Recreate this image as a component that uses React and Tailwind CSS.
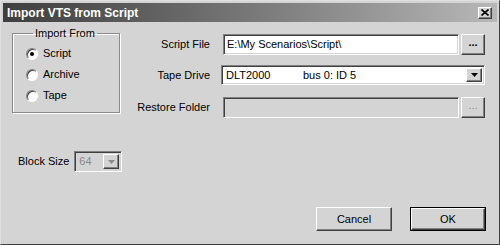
import React from "react";

const sunken =
  "border border-[#808080] border-b-white border-r-white shadow-[inset_1px_1px_0_#404040,inset_-1px_-1px_0_#d4d4d4]";
const raised =
  "border border-white border-b-[#404040] border-r-[#404040] shadow-[inset_-1px_-1px_0_#808080]";

const Radio = ({ label, checked }) => (
  <label className="flex items-center h-[21px]">
    <span className="w-[12px] h-[12px] rounded-full bg-white border border-[#808080] border-b-white border-r-white shadow-[inset_1px_1px_0_#404040] flex items-center justify-center">
      {checked && <span className="w-[4px] h-[4px] rounded-full bg-black" />}
    </span>
    <span className="ml-[5px]">{label}</span>
  </label>
);

const ArrowButton = ({ disabled }) => (
  <span
    className={`w-[16px] h-full bg-[#d4d4d4] flex items-center justify-center ${raised}`}
  >
    <svg width="7" height="4" viewBox="0 0 7 4">
      <path d="M0 0h7L3.5 4z" fill={disabled ? "#8a8a8a" : "#000"} />
    </svg>
  </span>
);

export default function App() {
  return (
    <div
      className="w-[500px] h-[245px] bg-[#d4d4d4] border border-[#e0e0e0] border-b-[#404040] border-r-[#404040] text-[11px] text-black overflow-hidden whitespace-nowrap"
      style={{ fontFamily: '"Liberation Sans", Arial, sans-serif' }}
    >
      {/* title bar */}
      <div className="mx-[2px] mt-[2px] h-[19px] bg-gradient-to-r from-[#3e3e3e] to-[#b8b8b8] flex items-center justify-between pl-[4px] pr-[5px]">
        <span className="text-white font-bold text-[12px]">Import VTS from Script</span>
        <span className={`w-[14px] h-[12px] bg-[#d4d4d4] flex items-center justify-center ${raised}`}>
          <svg width="8" height="7" viewBox="0 0 8 7">
            <path d="M0.5 0.5L7.5 6.5M7.5 0.5L0.5 6.5" stroke="#000" strokeWidth="1.6" />
          </svg>
        </span>
      </div>

      {/* top area */}
      <div className="flex">
        <div className="w-[133px] pl-[11px] pt-[5px]">
          <fieldset className="w-[108px] h-[86px] border border-[#8a8a8a] shadow-[inset_1px_1px_0_#fff,1px_1px_0_#fff] pl-[13px] pt-[4px]">
            <legend className="ml-[7px] px-[2px] leading-[12px]">Import From</legend>
            <Radio label="Script" checked />
            <Radio label="Archive" />
            <Radio label="Tape" />
          </fieldset>
        </div>

        <div className="flex flex-col pt-[12px]">
          <div className="flex items-center h-[21px]">
            <span className="w-[76px] text-right">Script File</span>
            <div className={`ml-[13px] w-[236px] h-full bg-white flex items-center pl-[3px] ${sunken}`}>
              E:\My Scenarios\Script\
            </div>
            <button className={`ml-[2px] w-[24px] h-[21px] bg-[#d4d4d4] font-bold leading-none pb-[5px] ${raised}`}>
              ...
            </button>
          </div>

          <div className="flex items-center h-[20px] mt-[10px]">
            <span className="w-[76px] text-right">Tape Drive</span>
            <div className={`ml-[11px] w-[264px] h-full bg-white flex items-center ${sunken} p-[2px]`}>
              <span className="flex-1 flex pl-[2px]">
                <span className="w-[77px]">DLT2000</span>
                <span>bus 0: ID 5</span>
              </span>
              <ArrowButton />
            </div>
          </div>

          <div className="flex items-center h-[21px] mt-[12px]">
            <span className="w-[76px] text-right">Restore Folder</span>
            <div className={`ml-[13px] w-[236px] h-full bg-[#d4d4d4] ${sunken}`} />
            <button className={`ml-[2px] w-[24px] h-[21px] bg-[#d4d4d4] text-[#8a8a8a] leading-none pb-[5px] ${raised}`}>
              ...
            </button>
          </div>
        </div>
      </div>

      {/* block size */}
      <div className="flex items-center mt-[33px] pl-[17px] h-[21px]">
        <span>Block Size</span>
        <div className={`ml-[5px] w-[48px] h-full bg-[#d4d4d4] flex items-center p-[2px] ${sunken}`}>
          <span className="flex-1 pl-[2px] text-[#8a8a8a]">64</span>
          <ArrowButton disabled />
        </div>
      </div>

      {/* buttons */}
      <div className="flex justify-end gap-[18px] mt-[35px] pr-[13px]">
        <button className={`w-[76px] h-[24px] bg-[#d4d4d4] ${raised}`}>Cancel</button>
        <div className="border border-black">
          <button className={`w-[74px] h-[22px] bg-[#d4d4d4] block ${raised}`}>OK</button>
        </div>
      </div>
    </div>
  );
}
